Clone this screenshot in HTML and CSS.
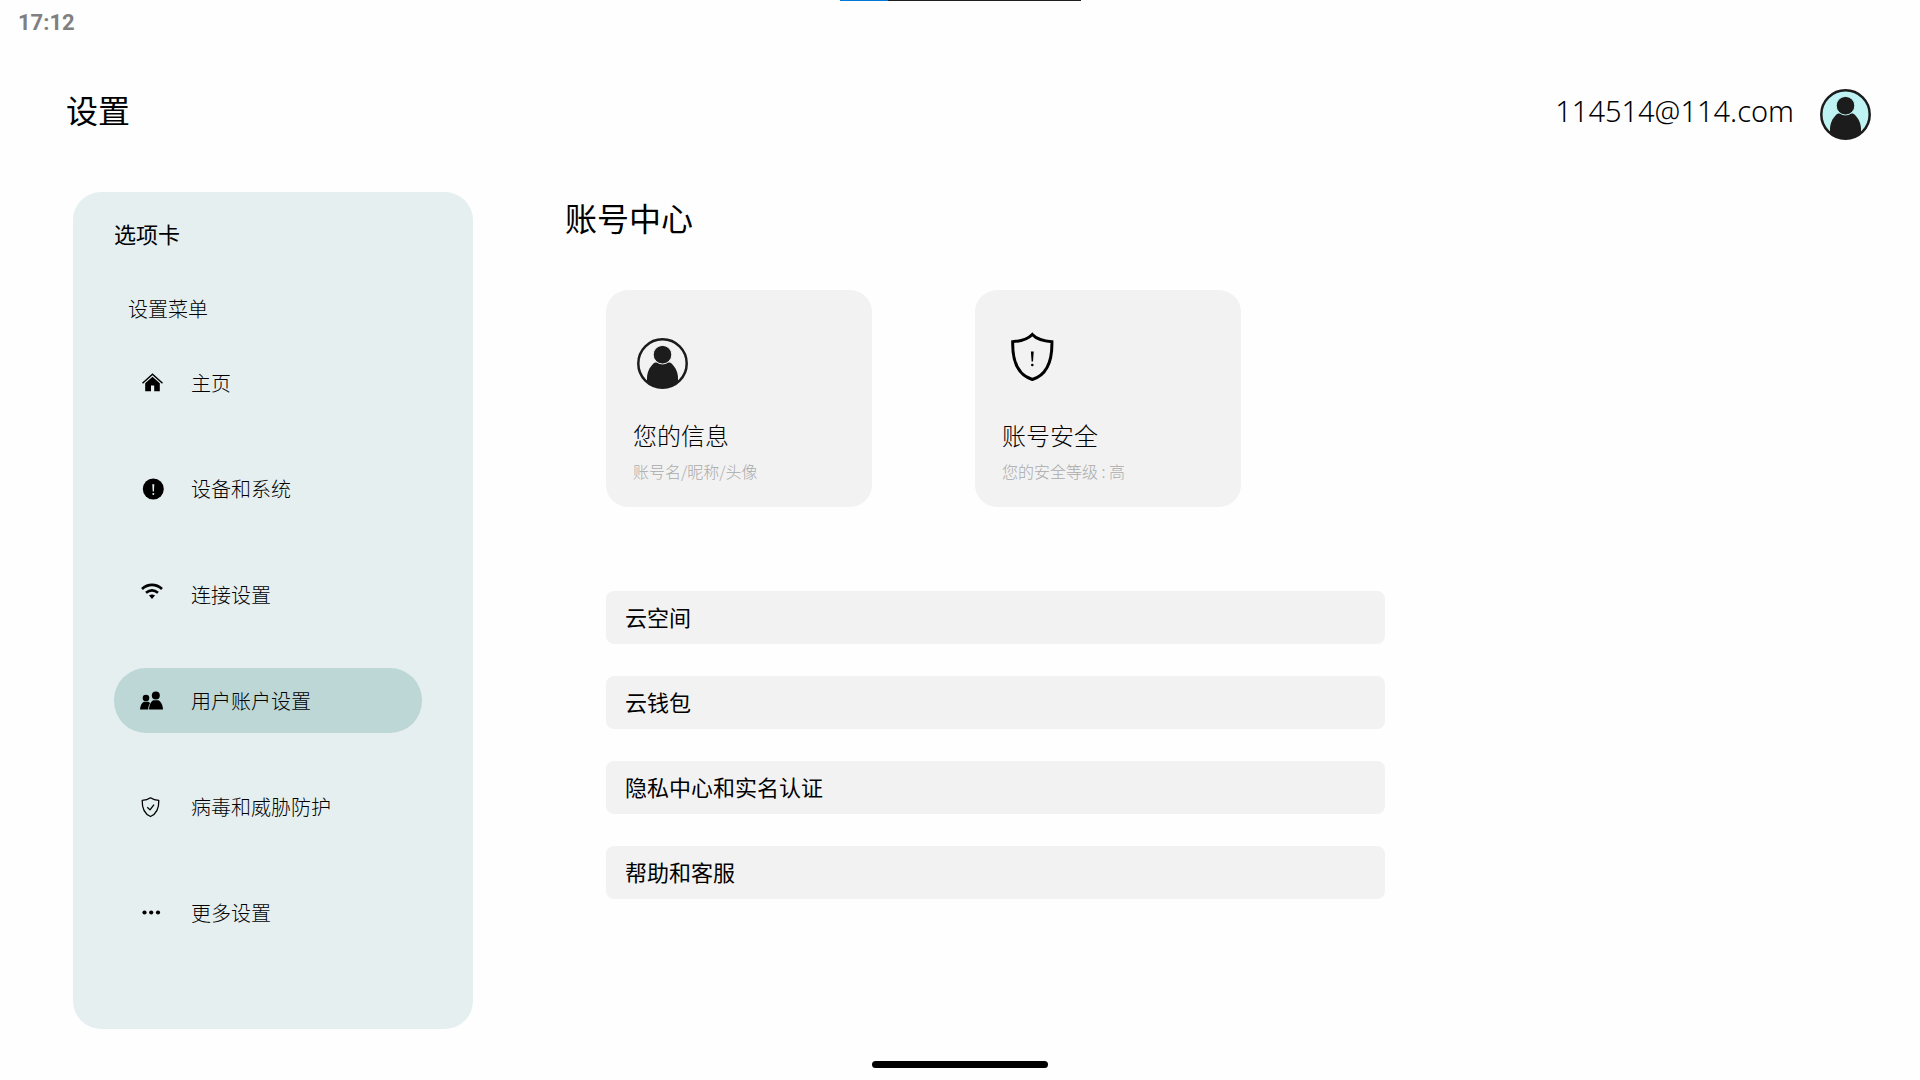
FILE: index.html
```html
<!DOCTYPE html>
<html lang="zh-CN">
<head>
<meta charset="utf-8">
<meta name="viewport" content="width=device-width, initial-scale=1">
<title>设置</title>
<link rel="stylesheet" href="styles.css">
</head>
<body>
<div class="top-handle"></div>
<div class="status-bar"><time>17:12</time></div>

<header class="header">
  <h1 class="title">设置</h1>
  <div class="account">
    <span class="email">114514@114.com</span>
    <svg class="avatar avatar-tinted" viewBox="0 0 51 51" aria-hidden="true">
      <circle class="avatar-bg" cx="25.500" cy="25.500" r="24"/>
      <path class="avatar-ink" d="M10 44V40C10 33 14 27 18 24.500H33C37 27 41 33 41 40V44C33 51.500 18 51.500 10 44Z"/>
      <circle class="avatar-head" cx="25.500" cy="16.700" r="9.300"/>
      <circle class="avatar-ring" cx="25.500" cy="25.500" r="24.200"/>
    </svg>
  </div>
</header>

<div class="layout">
  <aside class="sidebar">
    <h2 class="sidebar-title">选项卡</h2>
    <p class="sidebar-label">设置菜单</p>
    <nav class="menu">
      <button class="menu-item" type="button">
        <svg class="menu-icon" viewBox="0 0 24 24" aria-hidden="true">
          <path d="M2.500 12.200 12.500 3.300 22.500 12.200" fill="none" stroke="currentColor" stroke-width="1.500"/>
          <path d="M12.500 5.800 19.800 12.300V20.300H14.200V14.500H11V20.300H5.200V12.300Z"/>
        </svg>
        <span>主页</span>
      </button>
      <button class="menu-item" type="button">
        <svg class="menu-icon" viewBox="0 0 24 24" aria-hidden="true">
          <circle cx="13.300" cy="12" r="10.500"/>
          <path class="menu-icon-cut" d="M12.300 7.300H14.300L13.900 14.500H12.700Z"/>
          <circle class="menu-icon-cut" cx="13.300" cy="17" r="1"/>
        </svg>
        <span>设备和系统</span>
      </button>
      <button class="menu-item" type="button">
        <svg class="menu-icon" viewBox="0 0 24 24" aria-hidden="true">
          <path d="M2 5.900C8 .4 16 .4 22 5.900M6 9.800C9.800 6.800 14.200 6.800 18 9.800" fill="none" stroke="currentColor" stroke-width="2.700"/>
          <path d="M9 12.500C11 11.100 13 11.100 15 12.500L12 15.900Z"/>
        </svg>
        <span>连接设置</span>
      </button>
      <button class="menu-item active" type="button" aria-current="page">
        <svg class="menu-icon" viewBox="0 0 24 24" aria-hidden="true">
          <circle cx="6" cy="9" r="3.300"/>
          <path d="M0 20.500C.3 16.500 2 13.500 4 12.800H8C9.300 13.200 10 14 10 14.300C8.900 15.800 8.200 18 8.200 20.500Z"/>
          <circle cx="15.800" cy="6.500" r="4"/>
          <path d="M9 20.500C9.200 15.800 11 12.200 13.300 11.200H18.300C20.800 12.200 22.800 15.800 23 20.500Z"/>
        </svg>
        <span>用户账户设置</span>
      </button>
      <button class="menu-item" type="button">
        <svg class="menu-icon" viewBox="0 0 24 24" aria-hidden="true">
          <g fill="none" stroke="currentColor" stroke-width="1.300" stroke-linejoin="round">
            <path d="M10.500 2.800C8 4.600 5.300 5.300 2.200 5.400C2 12.500 4 18.500 10.500 21.500C17 18.500 19 12.500 18.800 5.400C15.700 5.300 13 4.600 10.500 2.800Z"/>
            <path d="M7.300 12.200 10 14.900 14 9.600"/>
          </g>
        </svg>
        <span>病毒和威胁防护</span>
      </button>
      <button class="menu-item" type="button">
        <svg class="menu-icon" viewBox="0 0 24 24" aria-hidden="true">
          <circle cx="4.500" cy="11.500" r="2.100"/><circle cx="11.200" cy="11.500" r="2.100"/><circle cx="18" cy="11.500" r="2.100"/>
        </svg>
        <span>更多设置</span>
      </button>
    </nav>
  </aside>

  <main class="content">
    <h2 class="title">账号中心</h2>
    <div class="cards">
      <button class="card" type="button">
        <svg class="avatar avatar-plain" viewBox="0 0 51 51" aria-hidden="true">
          <circle class="avatar-bg" cx="25.500" cy="25.500" r="24"/>
          <path class="avatar-ink" d="M10 44V40C10 33 14 27 18 24.500H33C37 27 41 33 41 40V44C33 51.500 18 51.500 10 44Z"/>
          <circle class="avatar-head" cx="25.500" cy="16.700" r="9.300"/>
          <circle class="avatar-ring" cx="25.500" cy="25.500" r="24.200"/>
        </svg>
        <span class="card-title">您的信息</span>
        <span class="card-note">账号名/昵称/头像</span>
      </button>
      <button class="card" type="button">
        <svg class="avatar" viewBox="4 0 51 51" aria-hidden="true">
          <path d="M30.300-3.500C26.500.5 21.500 3 10.700 3.700C10.300 22 15.500 37 30.300 41.500C45 37 50.300 22 49.900 3.700C39 3 34 .5 30.300-3.500Z" fill="none" stroke="#000" stroke-width="3"/>
          <path d="M28.900 13.500H31.700L31 23.500H29.600Z"/>
          <circle cx="30.300" cy="27" r="1.300"/>
        </svg>
        <span class="card-title">账号安全</span>
        <span class="card-note">您的安全等级 : 高</span>
      </button>
    </div>
    <div class="rows">
      <button class="row" type="button">云空间</button>
      <button class="row" type="button">云钱包</button>
      <button class="row" type="button">隐私中心和实名认证</button>
      <button class="row" type="button">帮助和客服</button>
    </div>
  </main>
</div>

<footer class="home-area"><div class="home-bar"></div></footer>
</body>
</html>
```
FILE: styles.css
```css
* {
  box-sizing: border-box;
}

body {
  margin: 0;
  min-height: 100vh;
  display: flex;
  flex-direction: column;
  background: #fefefe;
  color: #000;
  font-family: "Noto Sans", "Noto Sans CJK SC", sans-serif;
  font-size: 20px;
}

h1, h2, p {
  margin: 0;
  font-weight: 400;
}

button {
  border: 0;
  padding: 0;
  color: inherit;
  font-family: "Noto Sans CJK SC", sans-serif;
  text-align: left;
  cursor: pointer;
}

svg {
  display: block;
  flex: none;
  overflow: visible;
}

.top-handle {
  position: absolute;
  top: 0;
  left: 50%;
  width: 241px;
  height: 1px;
  margin-left: -120px;
  background: linear-gradient(to right, #0078d7 48px, #1f1f1f 48px);
}

.status-bar {
  padding: 9px 18px 0;
  color: #808080;
  font: 700 22px/28px Roboto, sans-serif;
}

.header {
  display: flex;
  align-items: flex-start;
  justify-content: space-between;
  padding: 52px 49px 52px 66px;
}

.title {
  font-family: "Noto Sans CJK SC", sans-serif;
  font-size: 32px;
  line-height: 40px;
}

.account {
  display: flex;
  align-items: flex-start;
  gap: 26px;
}

.email {
  font-size: 29px;
  font-weight: 300;
  line-height: 44px;
}

.avatar {
  width: 51px;
  height: 51px;
}

.avatar-tinted { --tint: #bff3f3; }
.avatar-plain { --tint: #f2f2f2; }

.avatar-bg { fill: var(--tint); }
.avatar-ink { fill: #1c1c1c; }
.avatar-head { fill: #1c1c1c; stroke: var(--tint); stroke-width: 1; }
.avatar-ring { fill: none; stroke: #1c1c1c; stroke-width: 2.500; }

.layout {
  display: flex;
  align-items: flex-start;
  gap: 92px;
  padding: 0 73px;
}

.sidebar {
  flex: none;
  width: 400px;
  padding: 26px 51px 84px 41px;
  border-radius: 28px;
  background: #e6eff0;
}

.sidebar-title {
  font-size: 22px;
  line-height: 32px;
}

.sidebar-label {
  padding: 45px 0 25px 14px;
  line-height: 30px;
  font-weight: 300;
}

.menu {
  display: flex;
  flex-direction: column;
  gap: 41px;
}

.menu-item {
  display: flex;
  align-items: center;
  gap: 27px;
  height: 65px;
  padding: 0 26px;
  border-radius: 32px;
  background: transparent;
  font-size: 20px;
  font-weight: 300;
}

.menu-item.active {
  background: #bdd7d7;
}

.menu-icon {
  width: 24px;
  height: 24px;
}

.menu-icon-cut { fill: #e6eff0; }

.content {
  flex: 1;
  min-width: 0;
  padding-top: 5px;
}

.cards {
  display: flex;
  flex-wrap: wrap;
  gap: 103px;
  padding: 53px 0 0 41px;
}

.card {
  display: flex;
  flex-direction: column;
  align-items: flex-start;
  width: 266px;
  padding: 48px 27px 24px;
  border-radius: 22px;
  background: #f2f2f2;
}

.card .avatar {
  margin-left: 4px;
}

.card-title {
  margin-top: 28px;
  font-size: 24px;
  font-weight: 300;
  line-height: 36px;
}

.card-note {
  margin-top: 6px;
  color: #aaa;
  font-size: 16px;
  font-weight: 300;
  line-height: 24px;
}

.rows {
  display: flex;
  flex-direction: column;
  gap: 32px;
  max-width: 820px;
  padding: 84px 0 0 41px;
}

.row {
  height: 53px;
  padding: 0 19px 3px;
  border-radius: 8px;
  background: #f2f2f2;
  font-size: 22px;
}

.home-area {
  display: flex;
  justify-content: center;
  margin-top: auto;
  padding: 20px 0 12px;
}

.home-bar {
  width: 176px;
  height: 7px;
  border-radius: 4px;
  background: #000;
}
```
